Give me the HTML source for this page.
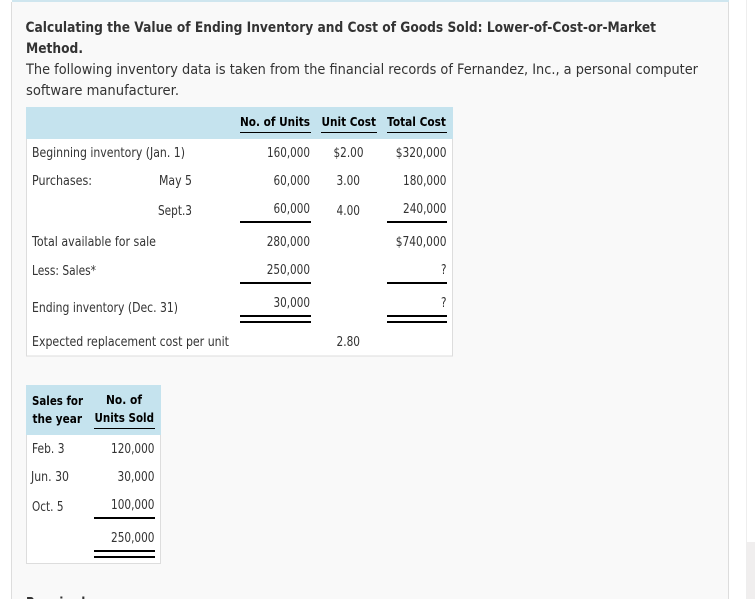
<!DOCTYPE html>
<html>
<head>
<meta charset="utf-8">
<style>
html,body{margin:0;padding:0;width:755px;height:599px;overflow:hidden;background:#fff}
svg{display:block}
text{font-family:"DejaVu Sans",sans-serif;fill:#333;font-size:13px}
.t{font-size:14.5px}
.b{font-weight:bold}
.h{font-weight:bold;fill:#000;font-size:12.5px}
</style>
</head>
<body>
<svg width="755" height="599" viewBox="0 0 755 599" xmlns="http://www.w3.org/2000/svg">
<rect x="11.5" y="0" width="717" height="600" fill="#f9f9f9" stroke="#ddd" stroke-width="1"/>
<rect x="0" y="0" width="755" height="2" fill="#fff"/>
<rect x="12" y="0" width="717" height="2" fill="#cfe6ef"/>
<rect x="746" y="542" width="9" height="57" fill="#f0eeee"/>
<rect x="746" y="0" width="1" height="599" fill="#eee"/>

<text class="t b" x="25.5" y="32" textLength="630.5" lengthAdjust="spacingAndGlyphs">Calculating the Value of Ending Inventory and Cost of Goods Sold: Lower-of-Cost-or-Market</text>
<text class="t b" x="26" y="53" textLength="57" lengthAdjust="spacingAndGlyphs">Method.</text>
<text class="t" x="26" y="74" textLength="672" lengthAdjust="spacingAndGlyphs">The following inventory data is taken from the financial records of Fernandez, Inc., a personal computer</text>
<text class="t" x="26" y="95" textLength="153" lengthAdjust="spacingAndGlyphs">software manufacturer.</text>

<rect x="26.5" y="107.5" width="426" height="248.5" fill="#fff" stroke="#ddd"/>
<rect x="26" y="107" width="427" height="32" fill="#c5e3ee"/>
<rect x="240" y="132" width="71" height="1" fill="#000"/>
<rect x="321" y="132" width="56" height="1" fill="#000"/>
<rect x="387" y="132" width="60" height="1" fill="#000"/>
<text class="h" x="240" y="126" textLength="70" lengthAdjust="spacingAndGlyphs">No. of Units</text>
<text class="h" x="321.5" y="126" textLength="54.5" lengthAdjust="spacingAndGlyphs">Unit Cost</text>
<text class="h" x="387" y="126" textLength="59" lengthAdjust="spacingAndGlyphs">Total Cost</text>

<text x="32" y="157" textLength="153" lengthAdjust="spacingAndGlyphs">Beginning inventory (Jan. 1)</text>
<text x="267" y="157" textLength="43" lengthAdjust="spacingAndGlyphs">160,000</text>
<text x="333.5" y="157" textLength="30" lengthAdjust="spacingAndGlyphs">$2.00</text>
<text x="395.7" y="157" textLength="50.8" lengthAdjust="spacingAndGlyphs">$320,000</text>

<text x="32" y="185" textLength="60" lengthAdjust="spacingAndGlyphs">Purchases:</text>
<text x="159" y="185" textLength="33" lengthAdjust="spacingAndGlyphs">May 5</text>
<text x="273.5" y="185" textLength="36.5" lengthAdjust="spacingAndGlyphs">60,000</text>
<text x="336.5" y="185" textLength="23.5" lengthAdjust="spacingAndGlyphs">3.00</text>
<text x="403" y="185" textLength="43.5" lengthAdjust="spacingAndGlyphs">180,000</text>

<text x="158" y="215" textLength="34" lengthAdjust="spacingAndGlyphs">Sept.3</text>
<text x="273.5" y="213" textLength="36.5" lengthAdjust="spacingAndGlyphs">60,000</text>
<text x="336.5" y="215" textLength="23.5" lengthAdjust="spacingAndGlyphs">4.00</text>
<text x="403" y="213" textLength="43.5" lengthAdjust="spacingAndGlyphs">240,000</text>
<rect x="240" y="221" width="71" height="2" fill="#000"/>
<rect x="387" y="221" width="60" height="2" fill="#000"/>

<text x="32" y="246" textLength="124" lengthAdjust="spacingAndGlyphs">Total available for sale</text>
<text x="266.7" y="246" textLength="43.3" lengthAdjust="spacingAndGlyphs">280,000</text>
<text x="395.7" y="246" textLength="50.8" lengthAdjust="spacingAndGlyphs">$740,000</text>

<text x="32" y="275" textLength="64" lengthAdjust="spacingAndGlyphs">Less: Sales*</text>
<text x="266.7" y="274" textLength="43.3" lengthAdjust="spacingAndGlyphs">250,000</text>
<text x="441" y="274" textLength="5.5" lengthAdjust="spacingAndGlyphs">?</text>
<rect x="240" y="282" width="71" height="2" fill="#000"/>
<rect x="387" y="282" width="60" height="2" fill="#000"/>

<text x="32" y="312" textLength="146" lengthAdjust="spacingAndGlyphs">Ending inventory (Dec. 31)</text>
<text x="273.5" y="307" textLength="36.5" lengthAdjust="spacingAndGlyphs">30,000</text>
<text x="441" y="307" textLength="5.5" lengthAdjust="spacingAndGlyphs">?</text>
<rect x="240" y="315" width="71" height="2" fill="#000"/>
<rect x="387" y="315" width="60" height="2" fill="#000"/>
<rect x="240" y="321" width="71" height="2" fill="#000"/>
<rect x="387" y="321" width="60" height="2" fill="#000"/>

<text x="32" y="346" textLength="197" lengthAdjust="spacingAndGlyphs">Expected replacement cost per unit</text>
<text x="336.5" y="346" textLength="23.5" lengthAdjust="spacingAndGlyphs">2.80</text>

<rect x="26.5" y="385.5" width="134" height="178" fill="#fff" stroke="#ddd"/>
<rect x="26" y="385" width="135" height="50" fill="#c5e3ee"/>
<rect x="94" y="428" width="61" height="1" fill="#000"/>
<text class="h" x="32" y="405" textLength="51" lengthAdjust="spacingAndGlyphs">Sales for</text>
<text class="h" x="32.5" y="423" textLength="49.5" lengthAdjust="spacingAndGlyphs">the year</text>
<text class="h" x="106" y="404" textLength="36" lengthAdjust="spacingAndGlyphs">No. of</text>
<text class="h" x="94.5" y="422" textLength="59.5" lengthAdjust="spacingAndGlyphs">Units Sold</text>

<text x="32" y="453" textLength="32.5" lengthAdjust="spacingAndGlyphs">Feb. 3</text>
<text x="111" y="453" textLength="43.5" lengthAdjust="spacingAndGlyphs">120,000</text>
<text x="31" y="481" textLength="38" lengthAdjust="spacingAndGlyphs">Jun. 30</text>
<text x="117.5" y="481" textLength="37" lengthAdjust="spacingAndGlyphs">30,000</text>
<text x="32" y="511" textLength="31.5" lengthAdjust="spacingAndGlyphs">Oct. 5</text>
<text x="111" y="509" textLength="43.5" lengthAdjust="spacingAndGlyphs">100,000</text>
<rect x="94" y="517" width="61" height="2" fill="#000"/>
<text x="111" y="542" textLength="43.5" lengthAdjust="spacingAndGlyphs">250,000</text>
<rect x="94" y="550" width="61" height="2" fill="#000"/>
<rect x="94" y="556" width="61" height="2" fill="#000"/>

<text class="t b" x="26" y="607.5" textLength="64" lengthAdjust="spacingAndGlyphs">Required:</text>
</svg>
</body>
</html>
